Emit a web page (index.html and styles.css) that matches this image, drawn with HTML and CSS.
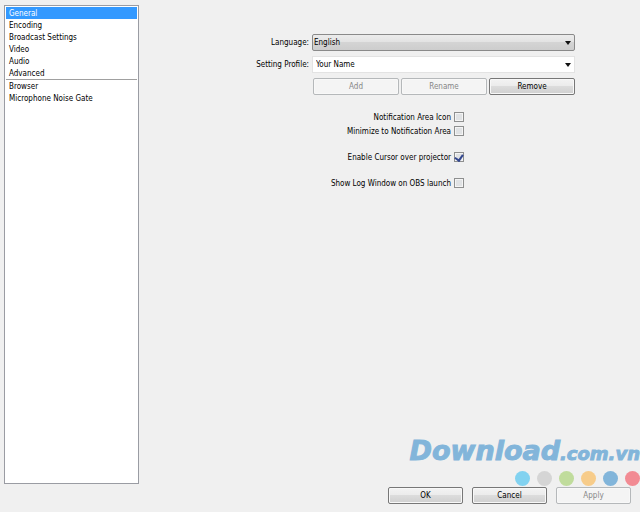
FILE: index.html
```html
<!DOCTYPE html>
<html lang="en">
<head>
  <meta charset="UTF-8">
  <meta name="viewport" content="width=device-width, initial-scale=1.0">
  <title>Settings</title>
  <link rel="stylesheet" href="styles.css">
</head>
<body>

<div class="window">
  <nav class="sidebar">
    <a href="#general" class="active">General</a>
    <a href="#encoding">Encoding</a>
    <a href="#broadcast">Broadcast Settings</a>
    <a href="#video">Video</a>
    <a href="#audio">Audio</a>
    <a href="#advanced">Advanced</a>
    <a href="#browser" class="plugin-start">Browser</a>
    <a href="#noise-gate">Microphone Noise Gate</a>
  </nav>

  <form class="panel">
    <div class="row">
      <label for="language">Language:</label>
      <div class="combo">
        <select id="language">
          <option>English</option>
        </select>
      </div>
    </div>
    <div class="row">
      <label for="profile">Setting Profile:</label>
      <div class="combo editable">
        <select id="profile">
          <option>Your Name</option>
        </select>
      </div>
    </div>
    <div class="profile-buttons">
      <button type="button" class="button" disabled>Add</button>
      <button type="button" class="button" disabled>Rename</button>
      <button type="button" class="button">Remove</button>
    </div>

    <div class="checks">
      <label class="check">Notification Area Icon <input type="checkbox"></label>
      <label class="check">Minimize to Notification Area <input type="checkbox"></label>
      <label class="check spaced">Enable Cursor over projector <input type="checkbox" checked></label>
      <label class="check spaced">Show Log Window on OBS launch <input type="checkbox"></label>
    </div>
  </form>

  <footer class="footer">
    <button type="button" class="button">OK</button>
    <button type="button" class="button">Cancel</button>
    <button type="button" class="button" disabled>Apply</button>
  </footer>

  <!-- Watermark over the window -->
  <div class="watermark">
    <div class="brand">Download<span>.com.vn</span></div>
    <div class="dots">
      <i class="cyan"></i>
      <i class="gray"></i>
      <i class="green"></i>
      <i class="orange"></i>
      <i class="blue"></i>
      <i class="red"></i>
    </div>
  </div>
</div>

</body>
</html>
```
FILE: styles.css
```css
* {
  box-sizing: border-box;
}

body {
  margin: 0;
  background-color: #f0f0f0;
  color: #000;
  font-family: "DejaVu Sans Condensed", "DejaVu Sans", sans-serif;
  font-size: 8px;
  line-height: 13px;
}

.window {
  position: relative;
  display: grid;
  grid-template-columns: 135px 1fr;
  grid-template-rows: 1fr auto;
  min-height: 100vh;
  padding: 5px 9px 8px 4px;
  overflow: hidden;
}

/* Sidebar */
.sidebar {
  padding: 1px;
  border: 1px solid #9a9ca3;
  background-color: white;
}

.sidebar a {
  display: block;
  height: 12px;
  padding-left: 3px;
  color: #000;
  text-decoration: none;
}

.sidebar a.active {
  background-color: #3399ff;
  color: white;
}

.sidebar a.plugin-start {
  height: 13px;
  border-top: 1px solid #a0a0a0;
}

/* General settings */
.panel {
  width: 436px;
  padding-top: 29px;
}

.row {
  display: grid;
  grid-template-columns: 170px 1fr;
  column-gap: 3px;
  align-items: center;
  margin-bottom: 5px;
}

.row label {
  text-align: right;
}

.combo {
  position: relative;
}

.combo::after {
  content: "";
  position: absolute;
  top: 7px;
  right: 4px;
  border: 3px solid transparent;
  border-top: 4px solid #111;
  border-bottom: none;
  pointer-events: none;
}

.combo select {
  appearance: none;
  display: block;
  width: 100%;
  height: 17px;
  padding: 0 1px;
  border: 1px solid #8a8a8a;
  border-radius: 2px;
  background: linear-gradient(#ececec, #e2e2e2 50%, #d4d4d4 50%, #cdcdcd);
  color: #000;
  font: inherit;
}

.combo.editable select {
  border-color: #e3e3e3;
  border-radius: 0;
  background: white;
  padding-left: 3px;
}

.profile-buttons {
  display: grid;
  grid-template-columns: repeat(3, 1fr);
  gap: 2px;
  margin-left: 174px;
}

.button {
  height: 17px;
  padding: 0;
  border: 1px solid #777;
  border-radius: 2px;
  background: linear-gradient(#f3f3f3, #ebebeb 50%, #dcdcdc 50%, #d0d0d0);
  box-shadow: inset 0 0 0 1px #f8f8f8;
  color: #000;
  font: inherit;
}

.button:disabled {
  border-color: #b5b8ba;
  background: #f4f4f4;
  color: #868686;
}

.checks {
  width: 325px;
  margin-top: 15px;
}

.check {
  display: flex;
  justify-content: flex-end;
  align-items: center;
  gap: 3px;
  height: 14px;
}

.check.spaced {
  margin-top: 12px;
}

.check input {
  appearance: none;
  display: grid;
  place-items: center;
  width: 10px;
  height: 10px;
  margin: 0;
  border: 1px solid #8e8f8f;
  background-color: #e0e2e4;
  box-shadow: inset 0 0 0 1px #f4f4f4;
}

.check input:checked::before {
  content: "";
  width: 4px;
  height: 6px;
  border: solid #33478f;
  border-width: 0 2px 2px 0;
  transform: rotate(35deg);
}

/* Bottom buttons */
.footer {
  grid-column: 1 / -1;
  display: flex;
  justify-content: flex-end;
  gap: 9px;
  padding-top: 3px;
}

.footer .button {
  width: 75px;
}

/* Watermark */
.watermark {
  position: absolute;
  right: 0;
  bottom: 26px;
  color: #82b5da;
}

.brand {
  font-family: "DejaVu Sans", sans-serif;
  font-size: 27px;
  font-style: italic;
  font-weight: bold;
  line-height: 30px;
  white-space: nowrap;
  -webkit-text-stroke: 1px #82b5da;
}

.brand span {
  font-size: 18px;
}

.dots {
  display: flex;
  justify-content: flex-end;
  gap: 7px;
  margin-top: 2px;
}

.dots i {
  width: 15px;
  height: 15px;
  border-radius: 50%;
}

.cyan { background-color: #82d2f0; }
.gray { background-color: #d5d5d5; }
.green { background-color: #c0dc9c; }
.orange { background-color: #f7cc8a; }
.blue { background-color: #82b5da; }
.red { background-color: #f28b93; }
```
